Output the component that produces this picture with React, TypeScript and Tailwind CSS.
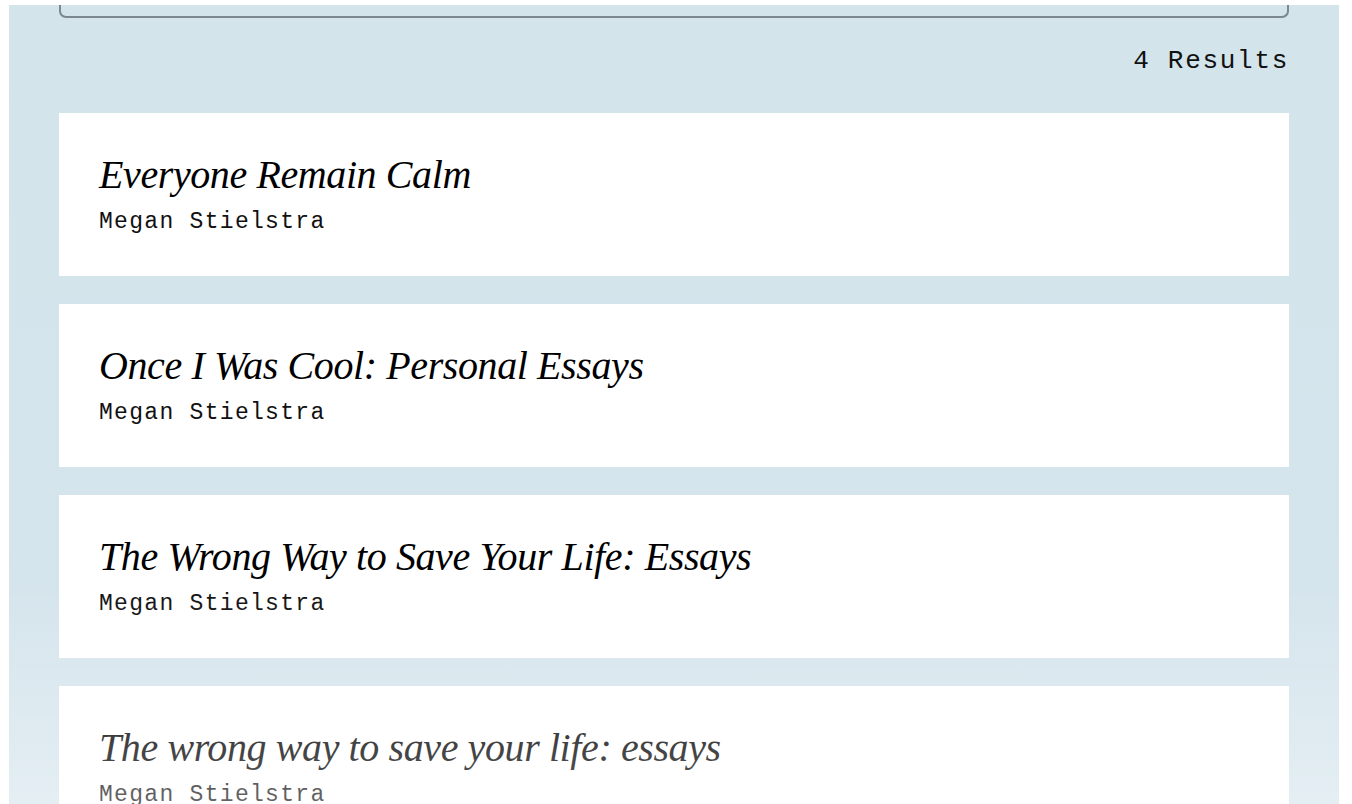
const BOOKS = [
  { title: "Everyone Remain Calm", author: "Megan Stielstra" },
  { title: "Once I Was Cool: Personal Essays", author: "Megan Stielstra" },
  { title: "The Wrong Way to Save Your Life: Essays", author: "Megan Stielstra" },
  { title: "The wrong way to save your life: essays", author: "Megan Stielstra" },
];

const serif = "font-['Liberation_Serif',serif]";
const mono = "font-['Liberation_Mono',monospace]";

function BookCard({ title, author }: { title: string; author: string }) {
  return (
    <div className="h-[163px] bg-white px-[40px] pt-[37px]">
      <h3 className={`${serif} text-[40px] italic leading-[50px] tracking-[-0.4px] text-black`}>
        {title}
      </h3>
      <p className={`${mono} mt-[7px] text-[23px] leading-[30px] tracking-[1.3px] text-[#111]`}>
        {author}
      </p>
    </div>
  );
}

export default function App() {
  return (
    <div className="relative h-[804px] overflow-hidden bg-white pt-[5px]">
      <div className="ml-[9px] h-[900px] w-[1330px] bg-gradient-to-b from-[#d3e4eb] to-[#d6e5ed] px-[50px]">
        {/* search field, scrolled mostly out of view */}
        <div className="h-[13px] rounded-b-[7px] border-2 border-t-0 border-[#7b8791]" />
        <p className={`${mono} mt-[28px] text-right text-[26px] leading-[30px] tracking-[1.7px] text-[#111]`}>
          4 Results
        </p>
        <div className="mt-[37px] flex flex-col gap-[28px]">
          {BOOKS.map((b, i) => (
            <BookCard key={i} {...b} />
          ))}
        </div>
      </div>
      {/* bottom fade */}
      <div className="pointer-events-none absolute inset-x-0 bottom-0 h-[220px] bg-gradient-to-b from-transparent to-white/35" />
    </div>
  );
}
